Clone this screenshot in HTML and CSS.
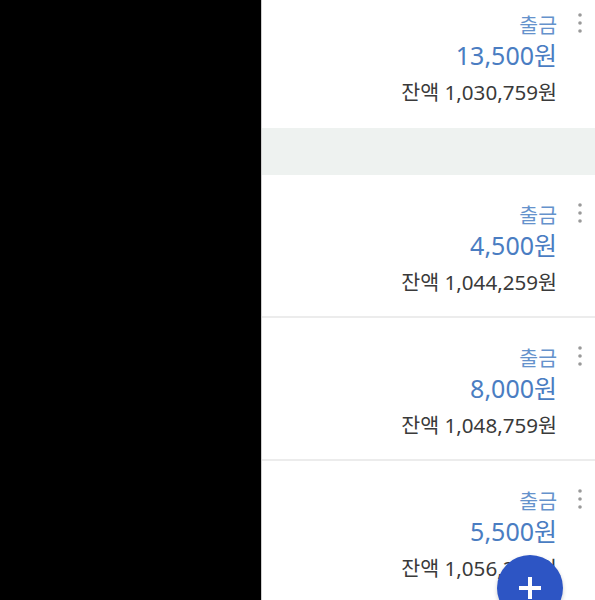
FILE: index.html
```html
<!DOCTYPE html>
<html lang="ko">
<head>
<meta charset="utf-8">
<link rel="stylesheet" href="styles.css">
</head>
<body>
<div class="screen">
  <div class="redact"></div>
  <div class="list">
    <div class="row first">
      <div class="info">
        <div class="type">출금</div>
        <div class="amount">13,500원</div>
        <div class="balance">잔액 1,030,759원</div>
      </div>
      <svg class="kebab" width="4" height="20" viewBox="0 0 4 20"><circle cx="2" cy="2" r="1.8"/><circle cx="2" cy="10" r="1.8"/><circle cx="2" cy="18" r="1.8"/></svg>
    </div>
    <div class="band"></div>
    <div class="row">
      <div class="info">
        <div class="type">출금</div>
        <div class="amount">4,500원</div>
        <div class="balance">잔액 1,044,259원</div>
      </div>
      <svg class="kebab" width="4" height="20" viewBox="0 0 4 20"><circle cx="2" cy="2" r="1.8"/><circle cx="2" cy="10" r="1.8"/><circle cx="2" cy="18" r="1.8"/></svg>
    </div>
    <div class="row">
      <div class="info">
        <div class="type">출금</div>
        <div class="amount">8,000원</div>
        <div class="balance">잔액 1,048,759원</div>
      </div>
      <svg class="kebab" width="4" height="20" viewBox="0 0 4 20"><circle cx="2" cy="2" r="1.8"/><circle cx="2" cy="10" r="1.8"/><circle cx="2" cy="18" r="1.8"/></svg>
    </div>
    <div class="row">
      <div class="info">
        <div class="type">출금</div>
        <div class="amount">5,500원</div>
        <div class="balance">잔액 1,056,259원</div>
      </div>
      <svg class="kebab" width="4" height="20" viewBox="0 0 4 20"><circle cx="2" cy="2" r="1.8"/><circle cx="2" cy="10" r="1.8"/><circle cx="2" cy="18" r="1.8"/></svg>
    </div>
  </div>
  <button class="fab" aria-label="추가">
    <svg width="24" height="24" viewBox="0 0 24 24"><rect x="10" y="1" width="4" height="22" fill="#fff"/><rect x="1" y="10" width="22" height="4" fill="#fff"/></svg>
  </button>
</div>
</body>
</html>
```
FILE: styles.css
```css
html, body {
  margin: 0;
  padding: 0;
  background: #fff;
  font-family: "Noto Sans", "Noto Sans CJK KR", sans-serif;
}
.screen {
  position: relative;
  width: 595px;
  height: 600px;
  overflow: hidden;
  display: flex;
}
.redact {
  width: 261px;
  flex: none;
  background: #000;
  border-right: 1px solid #cfcfcf;
}
.list {
  flex: 1;
  display: flex;
  flex-direction: column;
}
.row {
  flex: none;
  height: 143px;
  box-sizing: border-box;
  display: flex;
  justify-content: flex-end;
  align-items: flex-start;
  padding-right: 13px;
  border-bottom: 2px solid #ececec;
}
.row.first {
  margin-top: -15px;
  border-bottom: none;
}
.band {
  flex: none;
  height: 47px;
  background: #eef2f0;
}
.info {
  text-align: right;
  padding-top: 28px;
}
.type {
  font-size: 20.5px;
  line-height: 25px;
  color: #6592cc;
}
.amount {
  font-size: 25px;
  line-height: 34px;
  margin-bottom: 5px;
  color: #4a7dc2;
}
.balance {
  font-size: 20.6px;
  line-height: 30px;
  color: #3a3a3a;
}
.kebab {
  fill: #999;
  margin-left: 21px;
  margin-top: 28px;
}
.fab {
  position: absolute;
  left: 497px;
  top: 555px;
  width: 66px;
  height: 66px;
  border-radius: 50%;
  border: none;
  padding: 0;
  background: #2d55c4;
  display: flex;
  align-items: center;
  justify-content: center;
  box-shadow: 0 2px 4px rgba(0,0,0,0.2);
}
```
